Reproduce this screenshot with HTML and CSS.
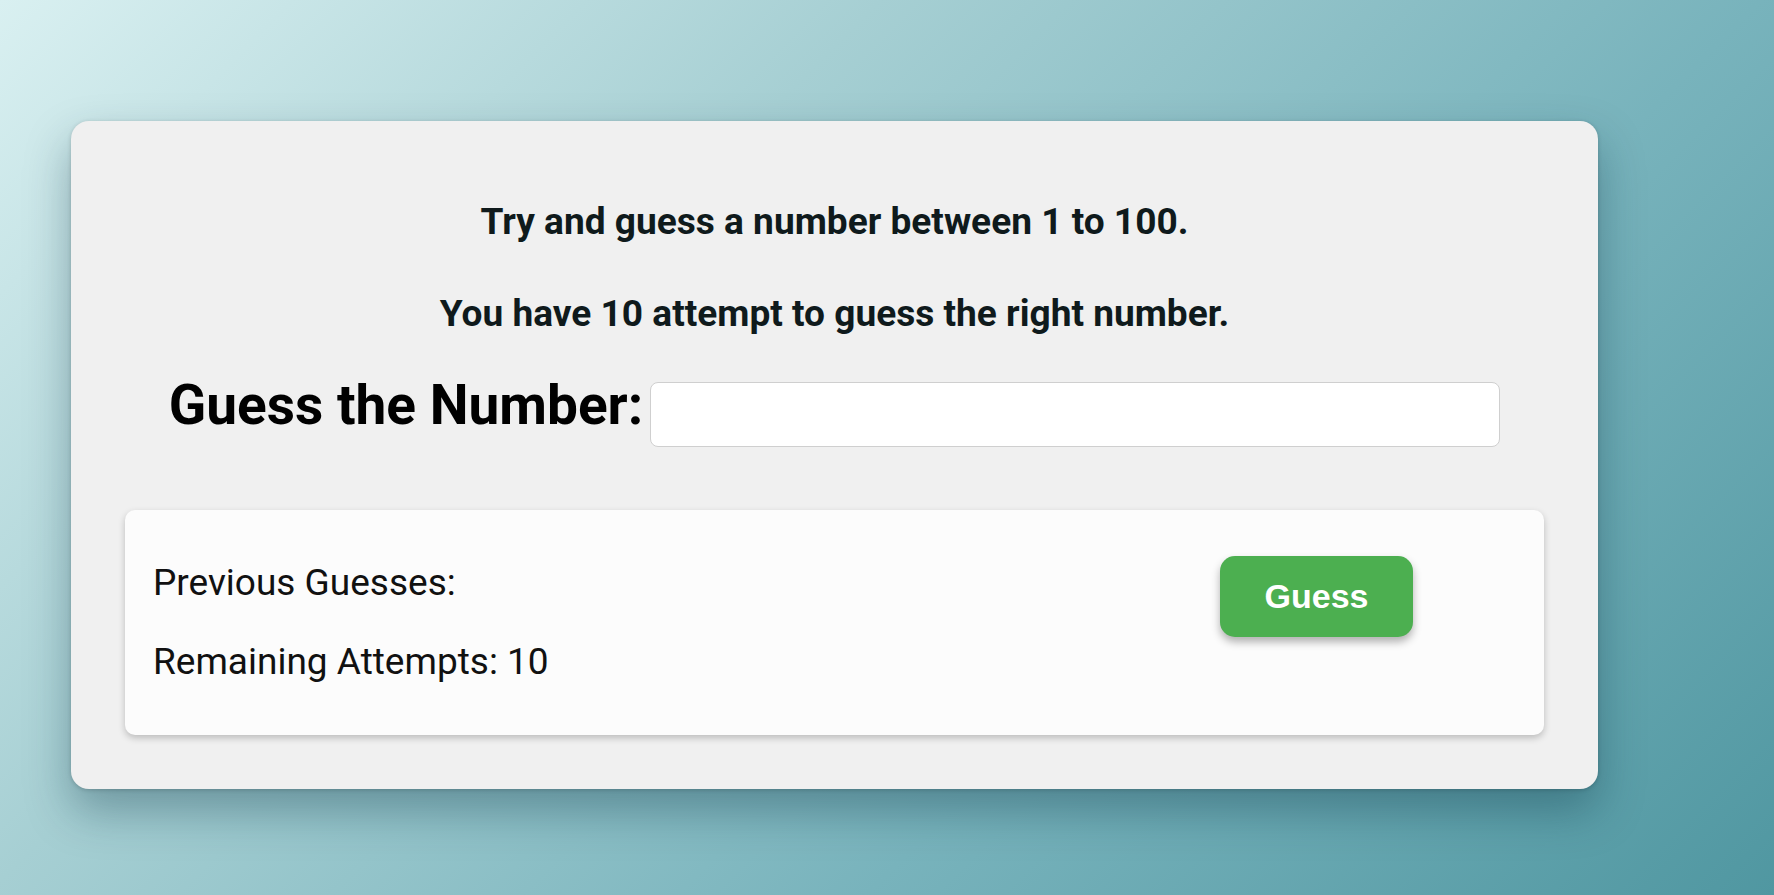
FILE: index.html
```html
<!DOCTYPE html>
<html lang="en">
<head>
<meta charset="utf-8">
<title>Guess the Number</title>
<link rel="stylesheet" href="styles.css">
</head>
<body>
<div class="page">
  <main class="card">
    <h3 class="intro">Try and guess a number between 1 to 100.</h3>
    <h3 class="intro second">You have 10 attempt to guess the right number.</h3>
    <div class="guess-row">
      <label class="guess-label" for="guess">Guess the Number:</label>
      <input class="guess-input" id="guess" type="text">
    </div>
    <section class="panel">
      <div class="stats">
        <p class="stat">Previous Guesses:</p>
        <p class="stat">Remaining Attempts: 10</p>
      </div>
      <button class="guess-btn" type="button">Guess</button>
    </section>
  </main>
</div>
</body>
</html>
```

FILE: styles.css
```css
html, body {
  margin: 0;
  padding: 0;
  height: 100%;
}

body {
  background: linear-gradient(135deg, #d9f0f1 0%, #a6cfd3 33%, #78b3bc 66%, #5097a1 100%);
  font-family: Roboto, "Noto Sans", sans-serif;
  overflow: hidden;
}

.page {
  padding: 121px 0 0 71px;
}

.card {
  box-sizing: border-box;
  width: 1527px;
  height: 668px;
  padding: 79px 54px 54px;
  background: #f0f0f0;
  border-radius: 18px;
  box-shadow: 0 22px 45px rgba(10, 50, 65, 0.35), 0 1px 4px rgba(0, 0, 0, 0.18);
}

.intro {
  margin: 0;
  font-size: 37.1px;
  line-height: 44px;
  font-weight: 700;
  color: #0f1a1c;
  text-align: center;
}

.intro.second {
  margin-top: 48px;
}

.guess-row {
  display: flex;
  justify-content: center;
  align-items: flex-start;
  gap: 7px;
  margin-top: 37px;
}

.guess-label {
  font-size: 55px;
  line-height: 65px;
  font-weight: 700;
  color: #000;
}

.guess-input {
  box-sizing: border-box;
  width: 850px;
  height: 65px;
  margin-top: 9px;
  border: 1px solid #cfcfcf;
  border-radius: 8px;
  background: #fff;
  font-size: 24px;
  padding: 0 12px;
  outline: none;
}

.panel {
  display: flex;
  justify-content: space-between;
  align-items: flex-start;
  margin-top: 63px;
  padding: 16px 131px 16px 28px;
  background: #fcfcfc;
  border-radius: 10px;
  box-shadow: 0 3px 7px rgba(0, 0, 0, 0.22);
}

.stat {
  margin: 35px 0;
  font-size: 37px;
  line-height: 44px;
  color: #111;
}

.guess-btn {
  margin-top: 30px;
  width: 193px;
  height: 81px;
  border: none;
  border-radius: 15px;
  background: #4caf50;
  color: #fff;
  font-family: "Liberation Sans", Arial, sans-serif;
  font-weight: 700;
  font-size: 34px;
  box-shadow: 0 5px 9px rgba(0, 0, 0, 0.3);
  cursor: pointer;
}
```
